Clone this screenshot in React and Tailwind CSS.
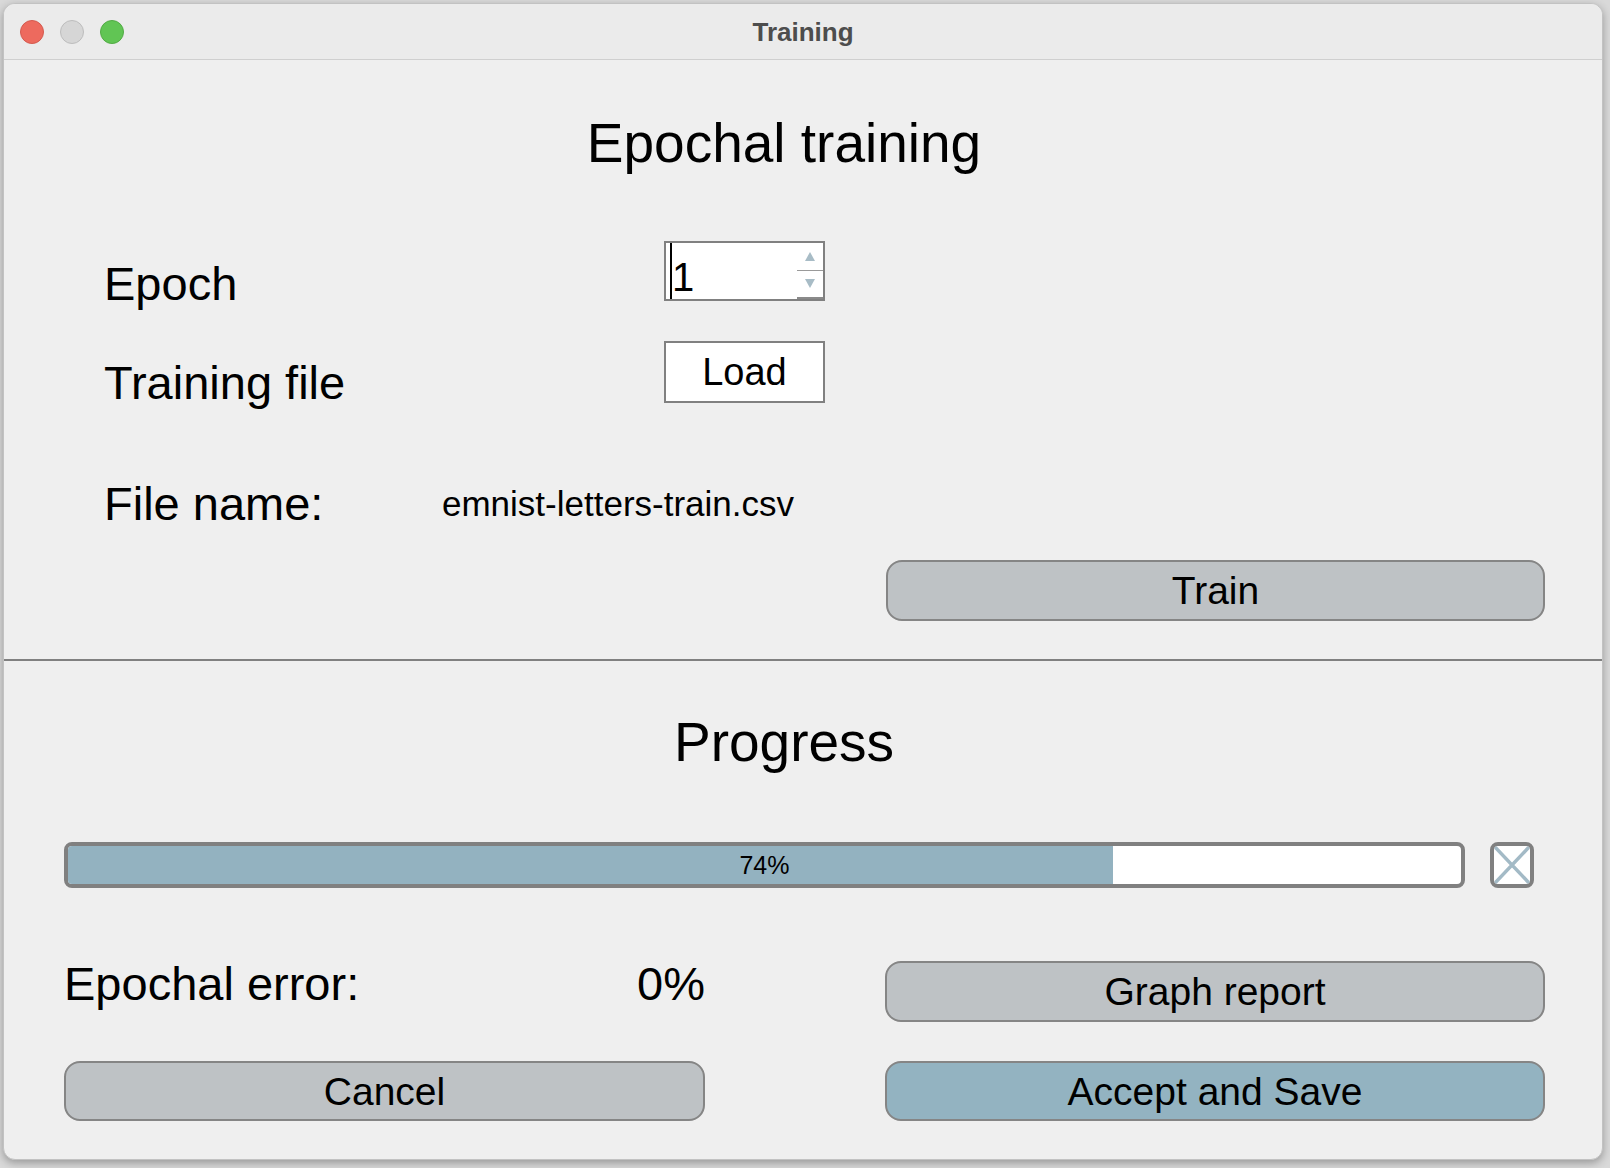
import React from 'react';

const Btn = ({ children, blue = false, className = '' }) => (
  <button
    className={`flex items-center justify-center rounded-[16px] border-2 border-[#858585] text-[39px] leading-none text-black ${
      blue ? 'bg-[#93b3c1]' : 'bg-[#bec2c5]'
    } ${className}`}
  >
    {children}
  </button>
);

const Light = ({ className }) => <span className={`w-[24px] h-[24px] rounded-full border ${className}`} />;

export default function App() {
  const progress = 74;

  return (
    <div className="w-[1610px] h-[1168px] bg-[#d9d9d9] pt-[3px] pl-[3px] font-['Liberation_Sans',Arial,sans-serif] text-black">
      <div className="w-[1600px] h-[1157px] rounded-[12px] bg-[#efefef] overflow-hidden flex flex-col border border-[#c2c2c2] shadow-[0_3px_8px_rgba(0,0,0,0.3)]">
        {/* Title bar */}
        <div className="h-[56px] shrink-0 bg-[#ebebeb] border-b border-[#cfcfcf] grid grid-cols-[1fr_auto_1fr] items-center">
          <div className="flex items-center gap-[16px] pl-[16px]">
            <Light className="bg-[#ed6a5e] border-[#d45a4f]" />
            <Light className="bg-[#d6d6d6] border-[#bdbdbd]" />
            <Light className="bg-[#61c554] border-[#52ab45]" />
          </div>
          <div className="text-[26px] font-bold leading-none text-[#4d4d4d]">Training</div>
          <div />
        </div>

        {/* Epochal training */}
        <div className="pt-[56px] pr-[38px] text-center text-[55px] leading-none">Epochal training</div>

        <div className="mt-[70px] h-[60px] flex items-start pl-[100px]">
          <div className="w-[560px] pt-[19px] text-[47px] leading-none">Epoch</div>
          <div className="w-[161px] h-[60px] border-2 border-[#808080] bg-white flex">
            <div className="flex-1 flex items-stretch pl-[4px]">
              <span className="w-[2px] bg-black" />
              <span className="pt-[14px] text-[40px] leading-none">1</span>
            </div>
            <div className="w-[26px] flex flex-col">
              <div className="flex-1 flex items-center justify-center border-b border-[#9a9a9a]">
                <svg width="10" height="9" viewBox="0 0 10 9">
                  <path d="M5 0 L10 9 L0 9 Z" fill="#a8bcc6" />
                </svg>
              </div>
              <div className="flex-1 flex items-center justify-center border-b-2 border-[#8a8a8a]">
                <svg width="10" height="9" viewBox="0 0 10 9">
                  <path d="M0 0 L10 0 L5 9 Z" fill="#a8bcc6" />
                </svg>
              </div>
            </div>
          </div>
        </div>

        <div className="mt-[40px] h-[62px] flex items-start pl-[100px]">
          <div className="w-[560px] pt-[18px] text-[47px] leading-none">Training file</div>
          <button className="w-[161px] h-[62px] border-2 border-[#808080] bg-white flex items-center justify-center text-[38px] leading-none">
            Load
          </button>
        </div>

        <div className="mt-[77px] h-[47px] flex items-baseline pl-[100px]">
          <div className="w-[338px] text-[47px] leading-none">File name:</div>
          <div className="text-[35px] leading-none -translate-y-[4px]">emnist-letters-train.csv</div>
        </div>

        <div className="mt-[33px] flex justify-end pr-[57px]">
          <Btn className="w-[659px] h-[61px]">Train</Btn>
        </div>

        <div className="mt-[38px] h-[2px] bg-[#808080]" />

        {/* Progress */}
        <div className="mt-[54px] pr-[38px] text-center text-[55px] leading-none">Progress</div>

        <div className="mt-[72px] flex pl-[60px] gap-[25px]">
          <div className="relative w-[1401px] h-[46px] border-4 border-[#808080] rounded-[8px] bg-white overflow-hidden">
            <div className="h-full w-[75%] bg-[#93b2c0]" />
            <div className="absolute inset-0 flex items-center justify-center text-[25px] leading-none">{progress}%</div>
          </div>
          <div className="w-[44px] h-[46px] border-4 border-[#808080] rounded-[8px] bg-white overflow-hidden">
            <svg viewBox="0 0 36 38" className="w-full h-full">
              <path d="M0 0 L36 38 M36 0 L0 38" stroke="#a3bac6" strokeWidth="3.5" />
            </svg>
          </div>
        </div>

        <div className="mt-[72px] flex items-start pl-[60px]">
          <div className="w-[641px] flex justify-between text-[47px] leading-none">
            <span>Epochal error:</span>
            <span>0%</span>
          </div>
          <Btn className="ml-[180px] mt-[1px] w-[660px] h-[61px]">Graph report</Btn>
        </div>

        <div className="mt-[39px] flex pl-[60px]">
          <Btn className="w-[641px] h-[60px]">Cancel</Btn>
          <Btn blue className="ml-[180px] w-[660px] h-[60px]">Accept and Save</Btn>
        </div>
      </div>
    </div>
  );
}
